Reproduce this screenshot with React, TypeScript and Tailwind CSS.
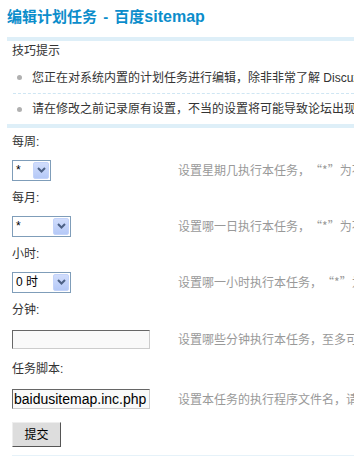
import React from "react";

const font = { fontFamily: '"Liberation Sans", "Noto Sans CJK SC", sans-serif' };
const cjk = { fontFamily: '"Noto Sans CJK SC", "Liberation Sans", sans-serif' };

function Chevron() {
  return (
    <svg width="9" height="6" viewBox="0 0 9 6">
      <path d="M1 1 L4.5 4.5 L8 1" stroke="#4d6185" strokeWidth="2" fill="none" />
    </svg>
  );
}

function FakeSelect({ value, width }: { value: string; width: string }) {
  return (
    <div className={`${width} h-[21px] border border-[#7f9db9] bg-white flex items-stretch`}>
      <div className="flex-1 pl-[3px] text-[12px] leading-[19px] text-black">{value}</div>
      <div className="w-[16px] my-[1px] mr-[1px] rounded-[2px] bg-gradient-to-b from-[#d1ddfc] to-[#b5c9f7] border border-[#c3d3fa] flex items-center justify-center">
        <Chevron />
      </div>
    </div>
  );
}

function Label({ text, h = "h-[28px]" }: { text: string; h?: string }) {
  return (
    <div className={`${h} flex items-center pl-[12px] text-[12px] text-[#333]`}>{text}</div>
  );
}

function Quoted({ text }: { text: string }) {
  const parts = text.split(/([“”])/);
  return (
    <>
      {parts.map((p, i) =>
        p === "“" ? (
          <span key={i} className="inline-block w-[12px] text-right">“</span>
        ) : p === "”" ? (
          <span key={i} className="inline-block w-[12px] text-left">”</span>
        ) : (
          <React.Fragment key={i}>{p}</React.Fragment>
        )
      )}
    </>
  );
}

function Row({ h, children, desc }: { h: string; children: React.ReactNode; desc: string }) {
  return (
    <div className={`${h} flex items-center`}>
      <div className="w-[178px] shrink-0 pl-[12px] flex items-center">{children}</div>
      <div className="whitespace-nowrap text-[12px] text-[#999]" style={cjk}>
        <Quoted text={desc} />
      </div>
    </div>
  );
}

function Bullet() {
  return <span className="ml-[4px] block shrink-0 w-[5px] h-[5px] rounded-full bg-[#b0b0b0]" />;
}

export default function App() {
  return (
    <div className="w-[354px] h-[456px] overflow-hidden bg-white" style={font}>
      <div className="h-[37px] pl-[7px] leading-[34px] whitespace-nowrap font-bold text-[15px] text-[#0b8dcb]">
        编辑计划任务 <span className="mx-[2px]">-</span> 百度<span className="text-[16px]">sitemap</span>
      </div>
      <div className="ml-[7px] h-[4px] bg-[#deeff8]" />
      <div className="h-[21px] leading-[21px] pl-[12px] text-[12px] text-[#333]">技巧提示</div>
      <div className="ml-[13px] h-[32px] border-b border-dashed border-[#cfe6f3] flex items-center whitespace-nowrap text-[12px] text-[#333]">
        <Bullet />
        <span className="ml-[10px]">您正在对系统内置的计划任务进行编辑，除非非常了解 Discuz! 结构，否则强烈建议不要修改默认设置。</span>
      </div>
      <div className="ml-[13px] h-[30px] flex items-center whitespace-nowrap text-[12px] text-[#333]">
        <Bullet />
        <span className="ml-[10px]">请在修改之前记录原有设置，不当的设置将可能导致论坛出现不可预期的错误。</span>
      </div>
      <div className="ml-[7px] h-[4px] bg-[#deeff8]" />

      <Label text="每周:" />
      <Row h="h-[28px]" desc="设置星期几执行本任务，“*”为不限制，本设置会覆盖下面的“日”设定">
        <FakeSelect value="*" width="w-[39px]" />
      </Row>
      <Label text="每月:" />
      <Row h="h-[28px]" desc="设置哪一日执行本任务，“*”为不限制">
        <FakeSelect value="*" width="w-[59px]" />
      </Row>
      <Label text="小时:" />
      <Row h="h-[28px]" desc="设置哪一小时执行本任务，“*”为不限制">
        <FakeSelect value="0 时" width="w-[59px]" />
      </Row>
      <Label text="分钟:" />
      <Row h="h-[30px]" desc="设置哪些分钟执行本任务，至多可以设置 12 个分钟值，多个值之间用半角逗号 &quot;,&quot; 隔开，留空为不限制">
        <div className="w-[138px] h-[19px] border border-t-[#666] border-l-[#666] border-b-[#ccc] border-r-[#ccc] bg-[#f9f9f9]" />
      </Row>
      <Label text="任务脚本:" h="h-[29px]" />
      <Row h="h-[31px]" desc="设置本任务的执行程序文件名，请勿包含路径，程序脚本统一存放于 ./source/include/cron/ 目录中">
        <div className="w-[138px] h-[20px] border border-t-[#666] border-l-[#666] border-b-[#ccc] border-r-[#ccc] bg-[#f9f9f9] pl-[1px] text-[14px] leading-[18px] text-black whitespace-nowrap overflow-hidden">
          baidusitemap.inc.php
        </div>
      </Row>
      <div className="h-[41px] pl-[12px] pt-[8px]">
        <div className="w-[49px] h-[25px] bg-[#ddd] border border-t-[#eee] border-l-[#eee] border-b-[#555] border-r-[#555] flex items-center justify-center text-[12px] text-black">
          提交
        </div>
      </div>
      <div className="ml-[12px] h-px bg-[#e6f2f9]" />
    </div>
  );
}
